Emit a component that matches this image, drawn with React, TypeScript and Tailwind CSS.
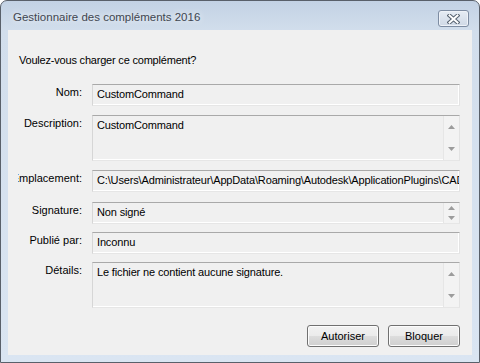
import React from "react";

const font = { fontFamily: '"Liberation Sans", Arial, sans-serif' };

const Arrow = ({ down }: { down?: boolean }) => (
  <svg width="7" height="4" viewBox="0 0 7 4">
    <polygon points={down ? "0,0 7,0 3.5,4" : "3.5,0 7,4 0,4"} fill="#9c9c9c" />
  </svg>
);

const Scrollbar = () => (
  <div className="w-[16px] h-full flex flex-col border-l border-[#e6e6e6] bg-[#f3f3f3]">
    <div className="flex-1 flex items-center justify-center">
      <Arrow />
    </div>
    <div className="flex-1 flex items-center justify-center">
      <Arrow down />
    </div>
  </div>
);

const Field = ({
  value,
  tall,
  scroll,
}: {
  value: string;
  tall?: boolean;
  scroll?: boolean;
}) => (
  <div
    className={`flex-1 min-w-0 flex border border-t-[#a9a9a9] border-l-[#d6d6d6] border-r-[#e3e3e3] border-b-[#e6e6e6] shadow-[inset_0_-1px_0_#ffffff,inset_-1px_0_0_#ffffff] bg-[#f0f0f0] ${
      tall ? "h-[46px]" : "h-[22px]"
    }`}
  >
    <div className="flex-1 min-w-0 overflow-hidden whitespace-nowrap pl-[4px] pt-[2px] text-[11px] leading-[15px] tracking-[-0.15px] text-black">
      {value}
    </div>
    {scroll && <Scrollbar />}
  </div>
);

const Row = ({
  label,
  className,
  children,
}: {
  label: string;
  className: string;
  children: React.ReactNode;
}) => (
  <div className={`flex gap-[10px] ${className}`}>
    <div className="w-[64px] shrink-0 flex justify-end overflow-hidden whitespace-nowrap pt-[1px] text-[11px] leading-[15px] text-black">
      {label}
    </div>
    {children}
  </div>
);

const WinButton = ({ label }: { label: string }) => (
  <button className="w-[72px] h-[22px] rounded-[3px] border border-[#707070] shadow-[inset_0_0_0_1px_#fcfcfc] bg-[linear-gradient(to_bottom,#f2f2f2_0%,#ebebeb_50%,#dddddd_51%,#cfcfcf_100%)] text-[11px] leading-[15px] text-black">
    {label}
  </button>
);

export default function App() {
  return (
    <div className="w-[480px] h-[363px] bg-white overflow-hidden" style={font}>
      <div className="w-[480px] h-[363px] rounded-t-[7px] border border-[#59606a] bg-[linear-gradient(to_bottom,#c3d2e4_0px,#d2deec_30px,#dae5f2_100%)] flex flex-col px-[7px] pb-[7px]">
        <div className="h-[29px] shrink-0 flex items-start justify-between">
          <div className="ml-[5px] pt-[9px] text-[11.5px] leading-[15px] text-[#3f4650] [text-shadow:0_0_6px_#ffffff]">
            Gestionnaire des compléments 2016
          </div>
          <div className="mt-[9px] mr-[3px] w-[31px] h-[17px] rounded-[3px] border border-[#7d8ca2] bg-[linear-gradient(to_bottom,#e6ecf4,#cfd9e6)] shadow-[inset_0_0_0_1px_#eef2f8] flex items-center justify-center">
            <svg width="13" height="10" viewBox="0 0 13 10">
              <path d="M2.5 1.5 L10.5 8.5 M10.5 1.5 L2.5 8.5" stroke="#55616f" strokeWidth="4" strokeLinecap="square" />
              <path d="M2.5 1.5 L10.5 8.5 M10.5 1.5 L2.5 8.5" stroke="#ffffff" strokeWidth="2" strokeLinecap="square" />
            </svg>
          </div>
        </div>

        <div className="flex-1 bg-[#f0f0f0] flex flex-col pl-[10px] pr-[12px] text-black">
          <div className="mt-[23px] ml-[1px] text-[11px] leading-[15px] tracking-[-0.2px]">
            Voulez-vous charger ce complément?
          </div>

          <Row label="Nom:" className="mt-[16px]">
            <Field value="CustomCommand" />
          </Row>
          <Row label="Description:" className="mt-[9px]">
            <Field value="CustomCommand" tall scroll />
          </Row>
          <Row label="Emplacement:" className="mt-[9px]">
            <Field value="C:\Users\Administrateur\AppData\Roaming\Autodesk\ApplicationPlugins\CAD2016.bundle" />
          </Row>
          <Row label="Signature:" className="mt-[10px]">
            <Field value="Non signé" scroll />
          </Row>
          <Row label="Publié par:" className="mt-[8px]">
            <Field value="Inconnu" />
          </Row>
          <Row label="Détails:" className="mt-[8px]">
            <Field value="Le fichier ne contient aucune signature." tall scroll />
          </Row>

          <div className="mt-[17px] flex justify-end gap-[9px]">
            <WinButton label="Autoriser" />
            <WinButton label="Bloquer" />
          </div>
        </div>
      </div>
    </div>
  );
}
